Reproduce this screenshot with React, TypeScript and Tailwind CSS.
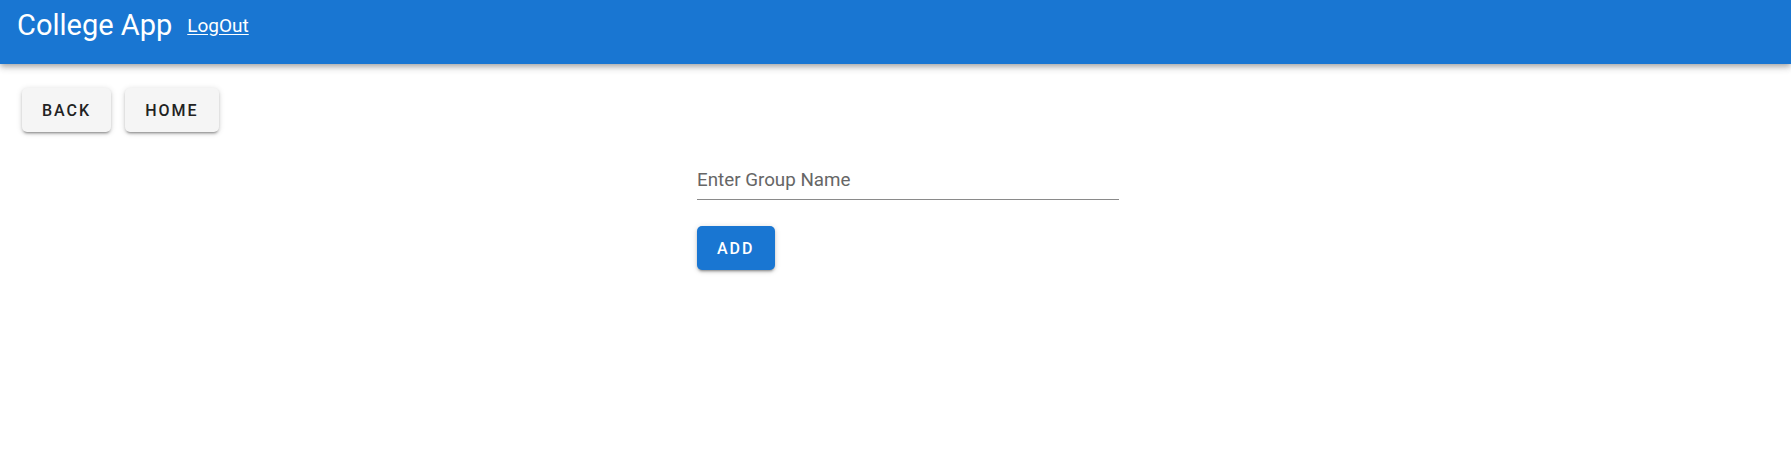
export default function App() {
  return (
    <div className="min-h-[456px] bg-white font-['Roboto',sans-serif]">
      {/* App bar */}
      <header className="flex h-[64px] items-start gap-[15px] bg-[#1976d2] pl-[17px] pt-[9px] text-white shadow-[0_2px_5px_-1px_rgba(0,0,0,0.2),0_4px_6px_0_rgba(0,0,0,0.14),0_1px_11px_0_rgba(0,0,0,0.12)]">
        <h1 className="text-[29px] leading-[32px] font-normal">College App</h1>
        <a href="#" className="mt-[5px] text-[19px] leading-[24px] underline underline-offset-[2px]">
          LogOut
        </a>
      </header>

      {/* Nav buttons */}
      <div className="flex gap-[14px] pl-[22px] pt-[24px]">
        <button className="flex h-[44px] items-center rounded-[5px] bg-[#f5f5f5] px-[20px] pt-[1px] text-[16px] leading-[24px] font-medium tracking-[2px] text-[#222222] shadow-[0_3px_2px_-2px_rgba(0,0,0,0.25),0_2px_3px_0_rgba(0,0,0,0.16),0_1px_6px_0_rgba(0,0,0,0.14)]">
          BACK
        </button>
        <button className="flex h-[44px] items-center rounded-[5px] bg-[#f5f5f5] px-[20px] pt-[1px] text-[16px] leading-[24px] font-medium tracking-[2px] text-[#222222] shadow-[0_3px_2px_-2px_rgba(0,0,0,0.25),0_2px_3px_0_rgba(0,0,0,0.16),0_1px_6px_0_rgba(0,0,0,0.14)]">
          HOME
        </button>
      </div>

      {/* Form */}
      <div className="ml-[697px] mt-[35px] w-[422px]">
        <div className="border-b border-[#8a8a8a] pb-[6px] pt-[1px]">
          <input
            type="text"
            placeholder="Enter Group Name"
            className="w-full bg-transparent text-[18.8px] leading-[24px] text-[#212121] outline-none placeholder:text-[#666666]"
          />
        </div>
        <button className="mt-[26px] flex h-[44px] items-center rounded-[5px] bg-[#1976d2] px-[20px] pt-[1px] text-[16px] leading-[24px] font-medium tracking-[2px] text-white shadow-[0_3px_2px_-2px_rgba(0,0,0,0.25),0_2px_3px_0_rgba(0,0,0,0.16),0_1px_6px_0_rgba(0,0,0,0.14)]">
          ADD
        </button>
      </div>
    </div>
  );
}
